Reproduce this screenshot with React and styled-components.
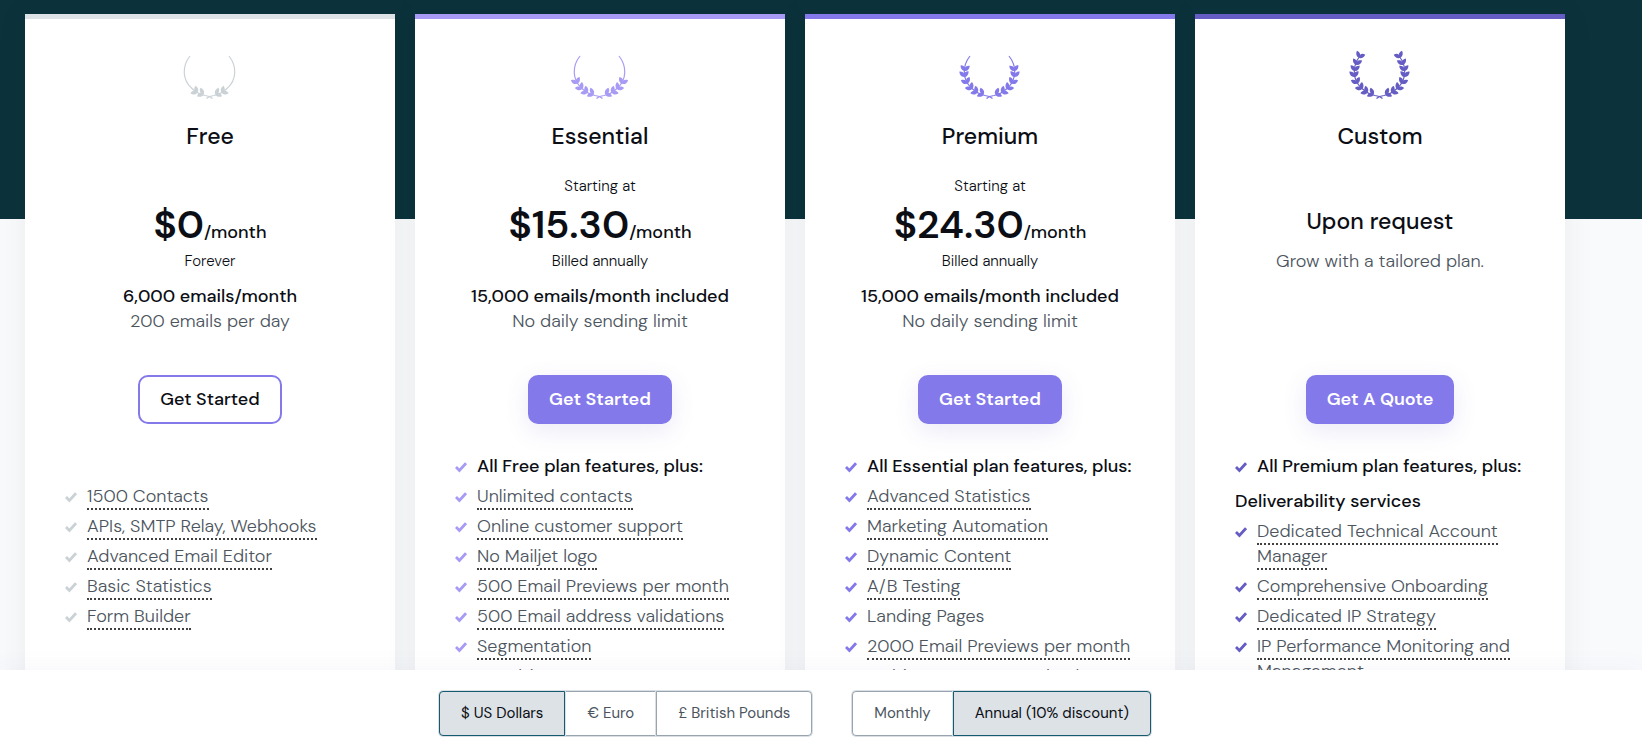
import React, { useState } from 'react';
import styled, { createGlobalStyle } from 'styled-components';

const GlobalStyle = createGlobalStyle`
  * {
    box-sizing: border-box;
  }

  body {
    margin: 0;
    font-family: "DM Sans", Inter, "Liberation Sans", sans-serif;
    font-size: 18px;
    line-height: 25px;
    color: #0b0e14;
  }

  button {
    font-family: inherit;
    cursor: pointer;
  }
`;

const Page = styled.div`
  display: flex;
  flex-direction: column;
  height: 100vh;
`;

const Plans = styled.main`
  flex: 1;
  min-height: 0;
  overflow-y: auto;
  scrollbar-width: none;
  padding: 14px 77px 0 25px;
  background: linear-gradient(#0c323b 219px, #f9fafc 219px);
`;

const PlanGrid = styled.div`
  display: grid;
  grid-template-columns: repeat(4, 1fr);
  gap: 20px;

  @media screen and (max-width: 1100px) {
    grid-template-columns: repeat(2, 1fr);
  }
`;

const Card = styled.section`
  display: flex;
  flex-direction: column;
  align-items: center;
  padding: 31px 40px 40px;
  background-color: #fff;
  border-top: 5px solid ${(props) => props.$color};
  box-shadow: 0 0 30px 0 rgba(12, 50, 59, 0.07);
`;

const PlanName = styled.h2`
  margin: 21px 0 0;
  font-size: 23px;
  font-weight: 500;
  line-height: 30px;
`;

const Offer = styled.div`
  display: flex;
  flex-direction: column;
  align-items: center;
  width: 100%;
  height: 224px;
  padding-top: 24px;
  text-align: center;
`;

const SmallNote = styled.p`
  margin: 0;
  min-height: 22px;
  font-size: 15px;
  font-weight: 300;
  line-height: 22px;
`;

const Price = styled.p`
  margin: 10px 0 0;
  font-size: 39px;
  font-weight: 600;
  line-height: 35px;
`;

const Period = styled.span`
  font-size: 18px;
  font-weight: 500;
`;

const OnRequest = styled.p`
  margin: 18px 0 0;
  font-size: 23px;
  font-weight: 500;
  line-height: 56px;
`;

const Volume = styled.p`
  margin: 12px 0 0;
  font-weight: 500;
`;

const Muted = styled.p`
  margin: 0;
  font-weight: 300;
  color: #4c555e;
`;

const CtaButton = styled.button`
  height: 49px;
  padding: 0 ${(props) => (props.$outline ? 20 : 19)}px 2px;
  border: 2px solid #8479ea;
  border-radius: 10px;
  background-color: ${(props) => (props.$outline ? '#fff' : '#8479ea')};
  color: ${(props) => (props.$outline ? '#0b0e14' : '#fff')};
  font-size: 18px;
  font-weight: ${(props) => (props.$outline ? 500 : 600)};
  box-shadow: ${(props) => (props.$outline ? 'none' : '0 7px 25px 0 rgba(90, 70, 190, 0.12)')};
`;

const FeatureList = styled.ul`
  align-self: stretch;
  margin: 30px 0 0;
  padding: 0;
  list-style: none;
`;

const Feature = styled.li`
  display: flex;
  gap: 10px;
  min-height: 25px;
  margin-bottom: 5px;
  font-weight: ${(props) => (props.$strong ? 500 : 300)};
  color: ${(props) => (props.$strong ? '#0b0e14' : '#4c555e')};

  svg {
    flex: none;
    margin-top: 7px;
  }
`;

const FeatureHeading = styled.li`
  margin: 10px 0 5px;
  font-weight: 500;
`;

const Hint = styled.span`
  border-bottom: 2px dotted #414141;
  cursor: help;
`;

const OptionsBar = styled.footer`
  position: relative;
  display: flex;
  flex-wrap: wrap;
  justify-content: center;
  gap: 10px 40px;
  padding: 21px 77px 11px 25px;
  background-color: #fff;
  box-shadow: 0 0 25px 0 rgba(80, 80, 160, 0.05);
`;

const Segments = styled.div`
  display: flex;
`;

const Segment = styled.button`
  position: relative;
  z-index: ${(props) => (props.$active ? 1 : 0)};
  height: 45px;
  padding: 0 21px 2px;
  border: 1px solid ${(props) => (props.$active ? '#165a70' : '#98a5ae')};
  background-color: ${(props) => (props.$active ? '#dde2e6' : '#fff')};
  color: ${(props) => (props.$active ? '#0b0e14' : '#4c555e')};
  box-shadow: 0 0 0 1px #d9dfe4;
  font-size: 15px;

  &:first-child {
    border-radius: 4px 0 0 4px;
  }
  &:last-child {
    border-radius: 0 4px 4px 0;
  }
`;

// x, y and angle of each leaf pair on the left branch, from the stem up
const leaves = [
  [21, 43, -66],
  [15, 41, -54],
  [10, 37, -38],
  [6, 31, -18],
  [4, 24, 0],
  [5, 18, 4],
  [7, 12, 14],
  [10, 5, 26],
];

function Branch({ count }) {
  return (
    <>
      <path
        d="M10 6C2 16 2 30 12 38.5Q18 44 25 45.5Q30 46 32.5 48.5"
        fill="none"
        stroke="currentColor"
        strokeWidth="1.2"
      />
      {leaves.slice(0, count).map(([x, y, angle]) => (
        <path
          key={y}
          transform={`translate(${x} ${y}) rotate(${angle})`}
          d="M0 3C-2.8 3-4.5.8-4.6-2.4C-2.2-2.6-.8-1.6 0-.4C.6-1.8 2.4-2.8 4.6-2.6C4.6.8 2.8 3 0 3Z"
          fill="currentColor"
        />
      ))}
    </>
  );
}

function Laurel({ count, color }) {
  return (
    <svg width="60" height="50" viewBox="0 0 60 50" color={color} overflow="visible" aria-hidden="true">
      <Branch count={count} />
      <g transform="translate(59 0) scale(-1 1)">
        <Branch count={count} />
      </g>
    </svg>
  );
}

function Check({ color }) {
  return (
    <svg width="12" height="12" viewBox="0 0 12 12" aria-hidden="true">
      <path d="M1 6L4.4 9.4L11 2.2" fill="none" stroke={color} strokeWidth="2.8" />
    </svg>
  );
}

const plans = [
  {
    name: 'Free',
    color: '#dde2e6',
    iconColor: '#cbd2d6',
    leafPairs: 2,
    price: '$0',
    billing: 'Forever',
    volume: '6,000 emails/month',
    limit: '200 emails per day',
    cta: 'Get Started',
    outline: true,
    features: [
      { spacer: true },
      { text: '1500 Contacts', hint: true },
      { text: 'APIs, SMTP Relay, Webhooks', hint: true },
      { text: 'Advanced Email Editor', hint: true },
      { text: 'Basic Statistics', hint: true },
      { text: 'Form Builder', hint: true },
    ],
  },
  {
    name: 'Essential',
    color: '#a79bf5',
    iconColor: '#a79bf5',
    leafPairs: 4,
    intro: 'Starting at',
    price: '$15.30',
    billing: 'Billed annually',
    volume: '15,000 emails/month included',
    limit: 'No daily sending limit',
    cta: 'Get Started',
    features: [
      { text: 'All Free plan features, plus:', strong: true },
      { text: 'Unlimited contacts', hint: true },
      { text: 'Online customer support', hint: true },
      { text: 'No Mailjet logo', hint: true },
      { text: '500 Email Previews per month', hint: true },
      { text: '500 Email address validations', hint: true },
      { text: 'Segmentation', hint: true },
      { text: 'AI Subject', hint: true },
    ],
  },
  {
    name: 'Premium',
    color: '#8479ea',
    iconColor: '#8479ea',
    leafPairs: 6,
    intro: 'Starting at',
    price: '$24.30',
    billing: 'Billed annually',
    volume: '15,000 emails/month included',
    limit: 'No daily sending limit',
    cta: 'Get Started',
    features: [
      { text: 'All Essential plan features, plus:', strong: true },
      { text: 'Advanced Statistics', hint: true },
      { text: 'Marketing Automation', hint: true },
      { text: 'Dynamic Content', hint: true },
      { text: 'A/B Testing', hint: true },
      { text: 'Landing Pages' },
      { text: '2000 Email Previews per month', hint: true },
      { text: 'Multi-user access and Roles', hint: true },
    ],
  },
  {
    name: 'Custom',
    color: '#655cc4',
    iconColor: '#655cc4',
    leafPairs: 8,
    onRequest: 'Upon request',
    limit: 'Grow with a tailored plan.',
    cta: 'Get A Quote',
    features: [
      { text: 'All Premium plan features, plus:', strong: true },
      { text: 'Deliverability services', heading: true },
      { text: 'Dedicated Technical Account Manager', hint: true },
      { text: 'Comprehensive Onboarding', hint: true },
      { text: 'Dedicated IP Strategy', hint: true },
      { text: 'IP Performance Monitoring and Management', hint: true },
    ],
  },
];

const currencies = ['$ US Dollars', '€ Euro', '£ British Pounds'];
const periods = ['Monthly', 'Annual (10% discount)'];

function FeatureItem({ feature, color }) {
  if (feature.spacer) return <Feature aria-hidden="true" />;
  if (feature.heading) return <FeatureHeading>{feature.text}</FeatureHeading>;
  return (
    <Feature $strong={feature.strong}>
      <Check color={color} />
      <div>{feature.hint ? <Hint>{feature.text}</Hint> : feature.text}</div>
    </Feature>
  );
}

function PlanCard({ plan }) {
  return (
    <Card $color={plan.color}>
      <Laurel count={plan.leafPairs} color={plan.iconColor} />
      <PlanName>{plan.name}</PlanName>
      <Offer>
        {plan.onRequest ? (
          <>
            <OnRequest>{plan.onRequest}</OnRequest>
            <Muted>{plan.limit}</Muted>
          </>
        ) : (
          <>
            <SmallNote>{plan.intro}</SmallNote>
            <Price>
              {plan.price}
              <Period>/month</Period>
            </Price>
            <SmallNote>{plan.billing}</SmallNote>
            <Volume>{plan.volume}</Volume>
            <Muted>{plan.limit}</Muted>
          </>
        )}
      </Offer>
      <CtaButton type="button" $outline={plan.outline}>
        {plan.cta}
      </CtaButton>
      <FeatureList>
        {plan.features.map((feature, i) => (
          <FeatureItem key={i} feature={feature} color={plan.iconColor} />
        ))}
      </FeatureList>
    </Card>
  );
}

function SegmentedControl({ label, options, value, onChange }) {
  return (
    <Segments role="group" aria-label={label}>
      {options.map((option) => (
        <Segment
          key={option}
          type="button"
          aria-pressed={option === value}
          $active={option === value}
          onClick={() => onChange(option)}
        >
          {option}
        </Segment>
      ))}
    </Segments>
  );
}

function App() {
  const [currency, setCurrency] = useState(currencies[0]);
  const [period, setPeriod] = useState(periods[1]);

  return (
    <Page>
      <GlobalStyle />
      <Plans>
        <PlanGrid>
          {plans.map((plan) => (
            <PlanCard key={plan.name} plan={plan} />
          ))}
        </PlanGrid>
      </Plans>
      <OptionsBar>
        <SegmentedControl label="Currency" options={currencies} value={currency} onChange={setCurrency} />
        <SegmentedControl label="Billing period" options={periods} value={period} onChange={setPeriod} />
      </OptionsBar>
    </Page>
  );
}

export default App;
